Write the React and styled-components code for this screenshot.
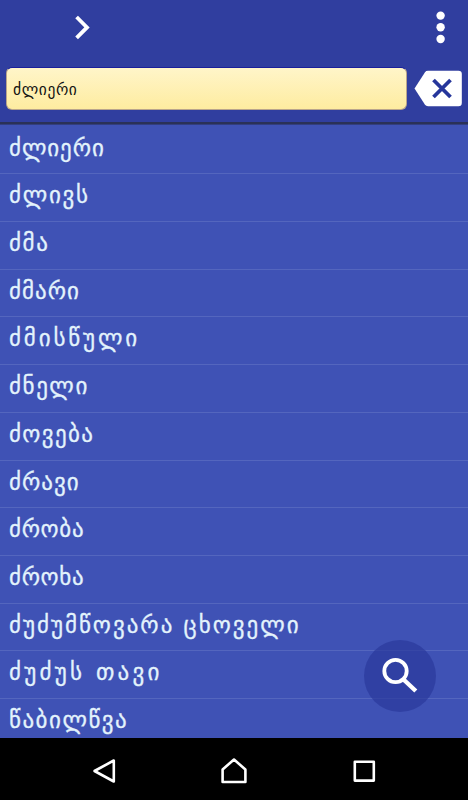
import React from 'react'
import styled, { createGlobalStyle } from 'styled-components'

const GlobalStyle = createGlobalStyle`
* {
box-sizing: border-box;
}
body {
margin: 0;
background: #000;
font-family: "DejaVu Sans", sans-serif;
}
`
const Screen = styled.div`
position: relative;
display: flex;
flex-direction: column;
width: 468px;
height: 800px;
overflow: hidden;
background: #3f52b5;
`
const Header = styled.header`
flex: none;
height: 125px;
background: linear-gradient(#303e9f 0 121.5px, #2a3157 122px 124px, #3a4ba6 125px);
`
const Toolbar = styled.div`
display: flex;
justify-content: space-between;
height: 67px;
padding: 10px 22px 0 74px;
`
const SearchRow = styled.div`
display: flex;
padding: 0 5px 0 6px;
`
const SearchInput = styled.input`
width: 401px;
height: 43px;
padding: 2px 6px 0;
border: 1px solid #b9a58c;
border-top-color: #1a1f9c;
border-radius: 6px;
outline: none;
background: linear-gradient(#fff5c9, #feeca0);
color: #111;
font-family: inherit;
font-size: 15.5px;
letter-spacing: 0.6px;
`
const ClearButton = styled.button`
margin: 3px 0 0 7px;
padding: 0;
border: none;
background: none;
height: 37px;
`
const List = styled.ul`
flex: 1;
margin: 0;
padding: 1.5px 0 0;
overflow: hidden;
list-style: none;
`
const Word = styled.li`
height: 47.73px;
padding-left: 9px;
border-bottom: 1px solid #5466be;
color: #e3f3fc;
font-size: 23px;
line-height: 43px;
letter-spacing: ${({ $spacing }) => $spacing}px;
white-space: nowrap;
-webkit-text-stroke: 0.3px #e3f3fc;
`
const Fab = styled.button`
position: absolute;
left: 364px;
top: 640px;
width: 72px;
height: 72px;
padding: 0;
border: none;
border-radius: 50%;
background: rgba(41, 56, 155, 0.68);
`
const NavBar = styled.nav`
flex: none;
display: flex;
justify-content: space-between;
height: 62px;
padding: 20px 90px 0 90px;
background: #000;
`

const words = [
    { text: "ძლიერი", spacing: 0.9 },
    { text: "ძლივს", spacing: 1.7 },
    { text: "ძმა", spacing: 1.6 },
    { text: "ძმარი", spacing: 1 },
    { text: "ძმისწული", spacing: 2.85 },
    { text: "ძნელი", spacing: 1.55 },
    { text: "ძოვება", spacing: 1.35 },
    { text: "ძრავი", spacing: 1 },
    { text: "ძრობა", spacing: 0.65 },
    { text: "ძროხა", spacing: 0.65 },
    { text: "ძუძუმწოვარა ცხოველი", spacing: 1.98 },
    { text: "ძუძუს თავი", spacing: 3.25 },
    { text: "წაბილწვა", spacing: 1.5 },
]

const App = () => {
    return (
        <Screen>
            <GlobalStyle />
            <Header>
                <Toolbar>
                    <svg width="18" height="34" viewBox="0 0 18 34">
                        <path d="M2.6 7 L13 17.4 L2.6 27.8" fill="none" stroke="#fff" strokeWidth="3.8" />
                    </svg>
                    <svg width="12" height="36" viewBox="0 0 12 36" fill="#fff">
                        <circle cx="6.6" cy="5.6" r="4.2" />
                        <circle cx="6.6" cy="17.3" r="4.2" />
                        <circle cx="6.6" cy="29" r="4.2" />
                    </svg>
                </Toolbar>
                <SearchRow>
                    <SearchInput type="text" defaultValue="ძლიერი" />
                    <ClearButton type="button">
                        <svg width="48" height="37" viewBox="0 0 48 37">
                            <path d="M14 0.8 H44.5 Q47.8 0.8 47.8 4 V33 Q47.8 36.2 44.5 36.2 H14 Q12 36.2 11 34.8 L0.5 18.5 L11 2.2 Q12 0.8 14 0.8Z" fill="#fff" />
                            <path d="M19.5 10 L36.5 27 M36.5 10 L19.5 27" stroke="#26369b" strokeWidth="3.8" />
                        </svg>
                    </ClearButton>
                </SearchRow>
            </Header>
            <List>
                {words.map((word) => <Word key={word.text} $spacing={word.spacing}>{word.text}</Word>)}
            </List>
            <Fab type="button">
                <svg width="72" height="72" viewBox="0 0 72 72" fill="none" stroke="#fff">
                    <circle cx="31.5" cy="31" r="11.2" strokeWidth="3.8" />
                    <path d="M39 39 L51.8 51" strokeWidth="4.4" />
                </svg>
            </Fab>
            <NavBar>
                <svg width="28" height="28" viewBox="0 0 28 28" fill="none" stroke="#fff" strokeWidth="2.6" strokeLinejoin="round">
                    <path d="M23.8 2.5 V23.5 L4.5 13 Z" />
                </svg>
                <svg width="28" height="28" viewBox="0 0 28 28" fill="none" stroke="#fff" strokeWidth="2.6" strokeLinejoin="round">
                    <path d="M2.6 24 V11.5 L14 1.5 L25.4 11.5 V24 Z" />
                </svg>
                <svg width="28" height="28" viewBox="0 0 28 28" fill="none" stroke="#fff" strokeWidth="2.6" strokeLinejoin="round">
                    <rect x="4.8" y="3.8" width="19" height="18.8" />
                </svg>
            </NavBar>
        </Screen>
    )
}

export default App
